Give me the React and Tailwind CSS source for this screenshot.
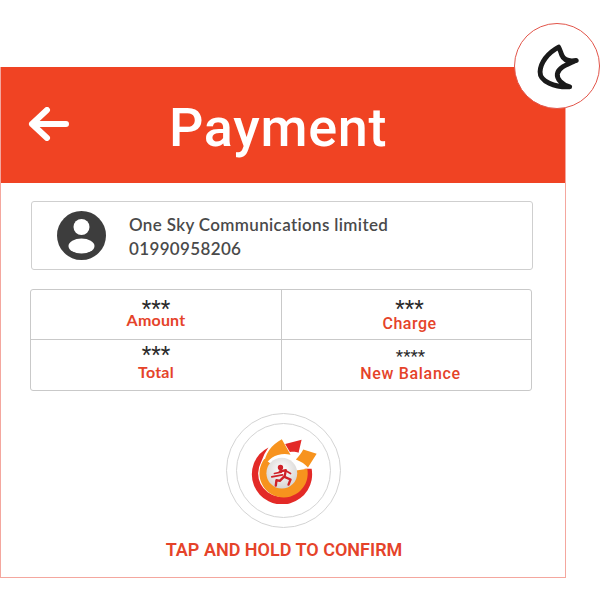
import React from "react";

const Cell = ({ stars, label, labelClass, className, starClass = "text-[22px]" }) => (
  <div className={`flex flex-col items-center ${className}`}>
    <span className={`font-['Roboto',sans-serif] leading-[18px] text-[#2b2b2b] ${starClass}`}>{stars}</span>
    <span className={labelClass}>{label}</span>
  </div>
);

const MoonBadge = () => (
  <div className="absolute left-[514px] top-[23px] w-[86px] h-[86px] rounded-full bg-white border border-[#e2554a]">
    <svg className="w-full h-full" viewBox="42 40 258 256">
      <path
        d="M176 110 C142 128 120 158 119 186 C118 216 165 234 210 232 C185 225 170 208 172 192 C175 175 195 165 230 151 C205 155 192 150 186 135 C182 125 180 117 176 110 Z"
        fill="none"
        stroke="#1a1a1a"
        strokeWidth="15"
        strokeLinejoin="round"
      />
    </svg>
  </div>
);

const Logo = () => (
  <svg className="w-[67px] h-[67px] ml-[3px]" viewBox="130 105 200 200">
    <defs>
      <radialGradient id="ball" cx="50%" cy="40%" r="60%">
        <stop offset="0%" stopColor="#ffffff" />
        <stop offset="100%" stopColor="#d6d4d2" />
      </radialGradient>
    </defs>
    {/* red outer crescent */}
    <path d="M182 136 A90 90 0 1 0 311 200 L290 200 A70 70 0 1 1 160 180 Q168 155 182 136 Z" fill="#e32a27" />
    {/* orange ring */}
    <path d="M170 170 A72 72 0 1 0 298 200 L222 212 Z" fill="#f7931e" />
    <circle cx="222" cy="213" r="46" fill="url(#ball)" />
    {/* top swooshes */}
    <path d="M168 194 C170 155 192 128 222 112 L248 158 C210 150 184 168 168 194 Z" fill="#f7931e" />
    <path d="M232 126 L281 113 L272 152 C262 148 255 148 246 150 Z" fill="#e32a27" />
    <path d="M264 172 C273 162 281 152 286 142 L326 155 L300 196 C292 186 280 178 264 172 Z" fill="#f7931e" />
    {/* runner */}
    <g fill="none" stroke="#cf2228" strokeLinecap="round" strokeLinejoin="round">
      <circle cx="218" cy="196" r="8" fill="#cf2228" stroke="none" />
      <path d="M216 208 L234 204 L230 224 L248 232 L242 247" strokeWidth="7" />
      <path d="M228 224 L216 236 L206 234 L204 250" strokeWidth="7" />
      <path d="M220 210 L200 214 M224 218 L192 224 M234 206 L248 214" strokeWidth="5" />
    </g>
  </svg>
);

export default function App() {
  return (
    <div className="relative w-[601px] h-[601px] bg-white pt-[67px] font-['Roboto',sans-serif]">
      <div className="w-[566px] h-[511px] border border-t-0 border-[#f4a79e]">
        <div className="relative h-[116px] bg-[#f04323] flex items-center">
          <svg className="absolute left-[27px] top-[40px] w-[42px] h-[34px]" viewBox="0 0 42 34" fill="none">
            <path d="M4 17 H38 M19 3 L4 17 L19 31" stroke="#fff" strokeWidth="6" strokeLinecap="round" strokeLinejoin="round" />
          </svg>
          <h1 className="ml-[168px] mt-[5px] text-[54px] leading-none font-medium text-white tracking-[0.7px]">Payment</h1>
        </div>

        <div className="px-[29px] pt-[18px]">
          <div className="ml-[1px] w-[502px] h-[69px] flex items-center border border-[#cfcfcf] rounded-[3px] pl-[25px]">
            <svg className="w-[49px] h-[49px]" viewBox="0 0 49 49">
              <circle cx="24.5" cy="24.5" r="24.5" fill="#3d3d3d" />
              <circle cx="24.5" cy="16" r="8" fill="#fff" />
              <ellipse cx="24.5" cy="35" rx="13" ry="7.5" fill="#fff" />
            </svg>
            <div className="ml-[23px] mt-[3px] font-['Lato',sans-serif] font-semibold text-[17px] leading-[24px] text-[#4a4a4a] tracking-[0.35px]">
              <p>One Sky Communications limited</p>
              <p>01990958206</p>
            </div>
          </div>

          <div className="mt-[19px] w-[502px] h-[102px] grid grid-cols-[251px_1fr] grid-rows-[50px_1fr] border border-[#c9c9c9] rounded-[3px]">
            <Cell
              stars="***"
              label="Amount"
              className="pt-[10px] border-r border-b border-[#c9c9c9]"
              labelClass="font-['Lato',sans-serif] font-bold text-[16px] leading-[18px] -mt-[7px] tracking-[0.2px] text-[#e5432a]"
            />
            <Cell
              stars="***"
              label="Charge"
              className="pt-[10px] pl-[6px] border-b border-[#c9c9c9]"
              labelClass="font-medium text-[16px] leading-[20px] -mt-[4px] tracking-[0.5px] text-[#e5432a]"
            />
            <Cell
              stars="***"
              label="Total"
              className="pt-[6px] border-r border-[#c9c9c9]"
              labelClass="font-['Lato',sans-serif] font-bold text-[16px] leading-[18px] -mt-[1px] tracking-[0.2px] text-[#e5432a]"
            />
            <Cell
              stars="****"
              label="New Balance"
              starClass="text-[17px]"
              className="pt-[7px] pl-[8px]"
              labelClass="font-medium text-[16px] leading-[18px] tracking-[0.7px] text-[#e5432a]"
            />
          </div>

          <div className="mt-[22px] flex justify-center">
            <div className="w-[115px] h-[115px] rounded-full border border-[#d4d4d4] flex items-center justify-center">
              <div className="w-[95px] h-[95px] rounded-full border border-[#d4d4d4] flex items-center justify-center">
                <Logo />
              </div>
            </div>
          </div>

          <p className="mt-[12px] pl-[2px] text-center text-[18px] leading-[20px] font-semibold text-[#e5432a]">TAP AND HOLD TO CONFIRM</p>
        </div>
      </div>
      <MoonBadge />
    </div>
  );
}
